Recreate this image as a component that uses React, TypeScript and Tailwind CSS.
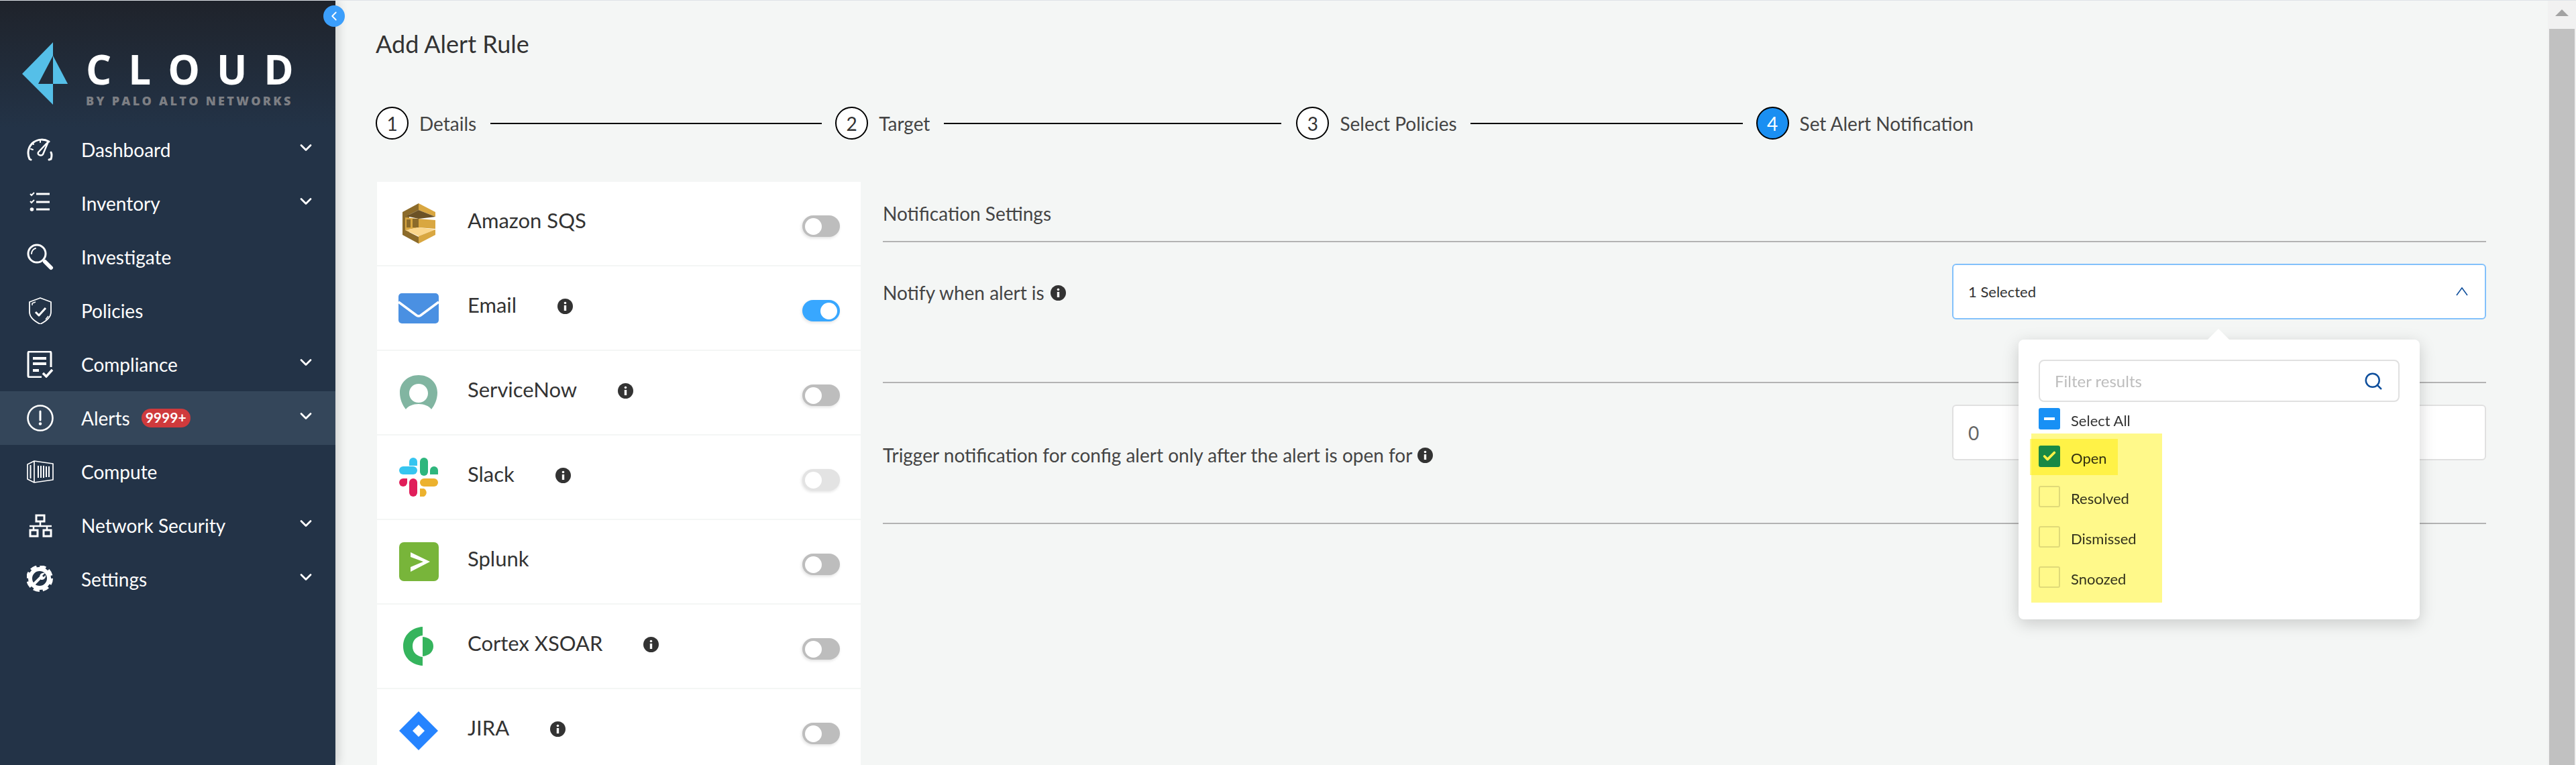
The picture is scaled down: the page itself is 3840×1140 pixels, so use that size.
import React from 'react';
import { ChevronDown, ChevronLeft, Search, Check } from 'lucide-react';

const LATO = "font-['Lato','Open_Sans',sans-serif]";

// sidebar icons, all drawn in a 40x40 box
const DashboardIcon = () => (
  <svg width="40" height="40" viewBox="0 0 40 40" fill="none" stroke="white" strokeWidth="3" strokeLinecap="round">
    <path d="M6 35 L4 34 C0 25 2 15 10 9 C17 4 26 4 33 8" />
    <path d="M36 24 C38 28 37 31 36 34 L33 35" />
    <path d="M20 5 v4 M9 20 l-3 -1 M10 12 l-2 -2" strokeWidth="2" />
    <path d="M17 24 L32 8 L24 27 C22 30 15 28 17 24 Z" strokeWidth="2.5" strokeLinejoin="round" />
  </svg>
);

const InventoryIcon = () => (
  <svg width="40" height="40" viewBox="0 0 40 40" fill="none" stroke="white" strokeWidth="3">
    <path d="M14 6 h20 M14 18 h20 M14 29 h20" />
    <path d="M5 6 l2 2 l4 -4 M5 17 l2 2 l4 -4" strokeWidth="2" />
    <circle cx="7.5" cy="29" r="2.8" fill="white" stroke="none" />
  </svg>
);

const InvestigateIcon = () => (
  <svg width="40" height="40" viewBox="0 0 40 40" fill="none" stroke="white" strokeWidth="3" strokeLinecap="round">
    <circle cx="15" cy="15" r="13" />
    <path d="M7 15 C7 11 10 8 13 7" strokeWidth="2" />
    <path d="M27 27 L36 36" strokeWidth="6" />
  </svg>
);

const PoliciesIcon = () => (
  <svg width="40" height="40" viewBox="0 0 40 40" fill="none" stroke="white" strokeWidth="1.8" strokeLinejoin="round">
    <path d="M20 1 L36 7 V22 C36 30 28 36 20 40 C12 36 4 30 4 22 V7 Z" />
    <path d="M13 22 L18 27 L28 16" strokeWidth="3" />
    <path d="M8 12 V9 L13 7 M32 28 L28 33" strokeWidth="1.5" />
  </svg>
);

const ComplianceIcon = () => (
  <svg width="40" height="40" viewBox="0 0 40 40" fill="none" stroke="white" strokeWidth="3">
    <path d="M36 24 V3 Q36 1 34 1 H4 Q2 1 2 3 V37 Q2 39 4 39 H22" />
    <path d="M9 11 H29 M9 19 H29 M9 29 H18" strokeWidth="4" />
    <path d="M24 33 L29 38 L38 28" strokeWidth="3.5" />
  </svg>
);

const AlertsIcon = () => (
  <svg width="40" height="40" viewBox="0 0 40 40" fill="none" stroke="white" strokeWidth="2.6">
    <circle cx="20" cy="20" r="18.5" />
    <path d="M20 10 V23" strokeWidth="3" strokeLinecap="round" />
    <circle cx="20" cy="28.5" r="2.2" fill="white" stroke="none" />
  </svg>
);

const ComputeIcon = () => (
  <svg width="40" height="40" viewBox="0 0 40 40" fill="none" stroke="white" strokeWidth="1.7" strokeLinejoin="round">
    <path d="M1 9 L11 4 L39 8 V32 L11 36 L1 31 Z M11 4 V36" />
    <path d="M5.5 10 V30 M17 11 V29 M21 11 V29 M25 11 V29 M29 12 V28 M33 12 V28" strokeWidth="2" />
  </svg>
);

const NetworkIcon = () => (
  <svg width="40" height="40" viewBox="0 0 40 40" fill="none" stroke="white" strokeWidth="3">
    <rect x="14" y="5" width="12" height="9" />
    <path d="M4 21 H37 M20 14 V21 M10 21 V26 M30 21 V26" strokeWidth="2.5" />
    <rect x="5" y="27" width="11" height="9" />
    <rect x="25" y="27" width="11" height="9" />
  </svg>
);

const SettingsIcon = () => (
  <svg width="40" height="40" viewBox="0 0 40 40">
    <circle cx="19" cy="19" r="14" fill="none" stroke="white" strokeWidth="6" />
    <circle cx="19" cy="19" r="17.5" fill="none" stroke="white" strokeWidth="5" strokeDasharray="9 4.7" />
    <path d="M11 27 L20 18" stroke="white" strokeWidth="4" strokeLinecap="round" />
    <path d="M19 17 A6 6 0 0 1 27 11 L23 15 L25 17 L28 14 A6 6 0 0 1 21 21 Z" fill="white" />
  </svg>
);

const navItems = [
  { label: 'Dashboard', icon: <DashboardIcon />, sub: true },
  { label: 'Inventory', icon: <InventoryIcon />, sub: true },
  { label: 'Investigate', icon: <InvestigateIcon />, sub: false },
  { label: 'Policies', icon: <PoliciesIcon />, sub: false },
  { label: 'Compliance', icon: <ComplianceIcon />, sub: true },
  { label: 'Alerts', icon: <AlertsIcon />, sub: true, active: true },
  { label: 'Compute', icon: <ComputeIcon />, sub: false },
  { label: 'Network Security', icon: <NetworkIcon />, sub: true },
  { label: 'Settings', icon: <SettingsIcon />, sub: true },
];

const Logo = () => (
  <div className="flex h-[182px] pl-[33px] pt-[62px] shrink-0">
    <svg width="68" height="93" viewBox="0 0 68 93" className="shrink-0">
      <path d="M0 47 L46 0 V20 L24 62 H46 V93 Z" fill="#55bfe8" />
      <path d="M46 20 L68 62 H46 Z" fill="#55bfe8" />
    </svg>
    <div className="ml-[27px] w-[320px]">
      <div className="font-['Open_Sans',sans-serif] font-bold text-[60px] leading-[42px] mt-[19px] tracking-[25px] text-white whitespace-nowrap">
        CLOUD
      </div>
      <div className="font-['Open_Sans',sans-serif] font-extrabold text-[18px] leading-[14px] mt-[19px] tracking-[3.3px] text-[#7d7f84] whitespace-nowrap">
        BY PALO ALTO NETWORKS
      </div>
    </div>
  </div>
);

const Sidebar = () => (
  <aside className="relative w-[500px] shrink-0 bg-[linear-gradient(180deg,#1f232b_0px,#233347_190px)] shadow-[4px_0_14px_rgba(0,0,0,0.16)] z-10">
    <Logo />
    {navItems.map((item) => (
      <div
        key={item.label}
        className={`flex items-center h-[80px] pl-[40px] pr-[30px] ${item.active ? 'bg-[#34465a]' : ''}`}
      >
        <span className="w-[40px] h-[40px] shrink-0">{item.icon}</span>
        <span className={`${LATO} ml-[41px] text-[28px] text-white`}>{item.label}</span>
        {item.active && (
          <span className={`${LATO} ml-[17px] mb-[1px] rounded-full bg-[#cf3a3c] px-[6px] h-[28px] leading-[25px] text-[21px] font-bold text-white`}>
            9999+
          </span>
        )}
        {item.sub && <ChevronDown className="ml-auto mb-[6px] text-white" size={28} strokeWidth={2.4} />}
      </div>
    ))}
    <button className="absolute top-[7px] left-[482px] w-[32px] h-[32px] rounded-full bg-[#3b9efb] flex items-center justify-center">
      <ChevronLeft className="text-white" size={22} strokeWidth={2} />
    </button>
  </aside>
);

const InfoIcon = ({ className = '' }: { className?: string }) => (
  <svg width="23" height="23" viewBox="0 0 23 23" className={`shrink-0 ${className}`}>
    <circle cx="11.5" cy="11.5" r="11.5" fill="#333333" />
    <circle cx="11.5" cy="6.5" r="1.8" fill="white" />
    <rect x="9.8" y="10" width="3.4" height="8" fill="white" />
  </svg>
);

const Step = ({ n, label, active }: { n: number; label: string; active?: boolean }) => (
  <div className="flex items-center shrink-0">
    <span
      className={`${LATO} w-[49px] h-[49px] rounded-full border-2 border-black flex items-center justify-center text-[28px] font-normal ${
        active ? 'bg-[#1a8ff2] text-white' : 'bg-white text-[#333]'
      }`}
    >
      {n}
    </span>
    <span className={`${LATO} ml-[16px] text-[28px] text-[#444]`}>{label}</span>
  </div>
);

const StepLine = ({ width, left, right }: { width: number; left: number; right: number }) => (
  <div className="h-[2px] bg-black shrink-0" style={{ width, marginLeft: left, marginRight: right }} />
);

const Stepper = () => (
  <div className="flex items-center h-[49px] mt-[72px]">
    <Step n={1} label="Details" />
    <StepLine width={494} left={21} right={20} />
    <Step n={2} label="Target" />
    <StepLine width={503} left={21} right={22} />
    <Step n={3} label="Select Policies" />
    <StepLine width={406} left={20} right={20} />
    <Step n={4} label="Set Alert Notification" active />
  </div>
);

const Toggle = ({ on, disabled }: { on?: boolean; disabled?: boolean }) => (
  <span
    className={`mt-[8px] w-[56px] h-[32px] rounded-full flex items-center px-[4px] shrink-0 shadow-[-1px_2px_4px_rgba(0,0,0,0.12)] ${
      on ? 'bg-[#38a7ff] justify-end' : disabled ? 'bg-[#e3e3e3]' : 'bg-[#bdbdbd]'
    }`}
  >
    <span className="w-[25px] h-[25px] rounded-full bg-white" />
  </span>
);

const SqsLogo = () => (
  <svg width="60" height="66" viewBox="0 0 60 66">
    <path d="M6 16 L30 3 V13 L16 20 V46 L30 53 V63 L6 50 Z" fill="#8c6b2a" />
    <path d="M30 3 L55 16 V23 L30 13 Z" fill="#d9a741" />
    <path d="M12 22 L30 13 L55 23 L30 26 Z" fill="#6b5226" />
    <path d="M10 24 L30 26 L55 28 V41 L30 39 L10 43 Z" fill="#d9a741" />
    <rect x="12" y="27" width="6" height="12" fill="#8c6b2a" />
    <rect x="21" y="26" width="9" height="13" fill="#8c6b2a" />
    <path d="M10 43 L30 39 L55 42 L30 52 Z" fill="#fbd68b" />
    <path d="M30 52 L55 42 V50 L30 63 Z" fill="#d9a741" />
  </svg>
);

const EmailLogo = () => (
  <svg width="60" height="45" viewBox="0 0 60 45">
    <rect width="60" height="45" rx="5" fill="#4a90e2" />
    <path d="M0 13 L27 33 Q30 35 33 33 L60 13" fill="none" stroke="white" strokeWidth="3.5" />
  </svg>
);

const ServiceNowLogo = () => (
  <svg width="56" height="52" viewBox="0 0 56 52">
    <path
      fillRule="evenodd"
      fill="#81b5a1"
      d="M28 0 C44 0 56 11 56 26 C56 36 52 45 47 51 C44 46 36 43 28 43 C20 43 12 46 9 51 C4 45 0 36 0 26 C0 11 12 0 28 0 Z M28 13 C20 13 14 19 14 27 C14 35 20 41 28 41 C36 41 42 35 42 27 C42 19 36 13 28 13 Z"
    />
  </svg>
);

const SlackLogo = () => (
  <svg width="58" height="58" viewBox="0 0 58 58">
    <rect x="0" y="13" width="27" height="12" rx="6" fill="#36c5f0" />
    <path d="M15 12 V6 A6 6 0 1 1 27 6 V12 Z" fill="#36c5f0" />
    <rect x="31" y="0" width="12" height="27" rx="6" fill="#2eb67d" />
    <path d="M46 25 V19 A6 6 0 1 1 58 19 V25 Z" fill="#2eb67d" />
    <rect x="31" y="31" width="27" height="12" rx="6" fill="#ecb22e" />
    <path d="M31 46 H37 A6 6 0 1 1 31 58 Z" fill="#ecb22e" />
    <rect x="15" y="31" width="12" height="27" rx="6" fill="#e01e5a" />
    <path d="M12 31 V37 A6 6 0 1 1 0 37 A6 6 0 0 1 6 31 Z" fill="#e01e5a" />
  </svg>
);

const SplunkLogo = () => (
  <svg width="59" height="58" viewBox="0 0 59 58">
    <rect width="59" height="58" rx="7" fill="#78b53a" />
    <path d="M17 15 L46 29 L17 44 V37 L36 29 L17 22 Z" fill="white" />
  </svg>
);

const CortexLogo = () => (
  <svg width="46" height="58" viewBox="0 0 46 58">
    <path d="M29 0 C12 1 0 13 0 29 C0 45 12 57 29 58 V45 C20 44 14 38 14 29 C14 20 20 14 29 13 Z" fill="#35b45d" />
    <path d="M29 15 C39 16 45 21 45 29 C45 37 39 43 29 44 Z" fill="#35b45d" />
  </svg>
);

const JiraLogo = () => (
  <svg width="58" height="58" viewBox="0 0 58 58">
    <path fillRule="evenodd" d="M29 0 L58 29 L29 58 L0 29 Z M29 20 L20 29 L29 38 L38 29 Z" fill="#2684ff" />
  </svg>
);

const integrations = [
  { name: 'Amazon SQS', logo: <SqsLogo />, info: false },
  { name: 'Email', logo: <EmailLogo />, info: true, on: true },
  { name: 'ServiceNow', logo: <ServiceNowLogo />, info: true },
  { name: 'Slack', logo: <SlackLogo />, info: true, disabled: true },
  { name: 'Splunk', logo: <SplunkLogo />, info: false },
  { name: 'Cortex XSOAR', logo: <CortexLogo />, info: true },
  { name: 'JIRA', logo: <JiraLogo />, info: true },
];

const IntegrationList = () => (
  <div className="ml-[2px] w-[721px] shrink-0 flex flex-col gap-[2px]">
    {integrations.map((it) => (
      <div key={it.name} className="h-[124px] bg-white flex items-center pl-[32px] pr-[31px] shrink-0">
        <span className="w-[60px] flex justify-center shrink-0">{it.logo}</span>
        <span className={`${LATO} ml-[43px] mb-[10px] text-[31px] text-[#333] whitespace-nowrap`}>{it.name}</span>
        {it.info && <InfoIcon className="ml-[61px] mb-[6px]" />}
        <span className="ml-auto">
          <Toggle on={it.on} disabled={it.disabled} />
        </span>
      </div>
    ))}
  </div>
);

const FilterOption = ({ label, state, gap = 28 }: { label: string; state: 'on' | 'off' | 'some'; gap?: number }) => (
  <div className="flex items-center h-[32px]" style={{ marginBottom: gap }}>
    <span
      className={`w-[32px] h-[32px] rounded-[3px] flex items-center justify-center shrink-0 ${
        state === 'off' ? 'border-2 border-[#e0e0e0] bg-white' : 'bg-[#1890f5]'
      }`}
    >
      {state === 'on' && <Check className="text-white" size={22} strokeWidth={4} />}
      {state === 'some' && <span className="w-[16px] h-[4px] bg-white" />}
    </span>
    <span className={`${LATO} ml-[16px] text-[22px] text-[#333] mt-[4px]`}>{label}</span>
  </div>
);

const FilterPopover = () => (
  <div className="absolute left-[3009px] top-[505px] w-[598px] h-[417px] bg-white rounded-[8px] shadow-[0_6px_24px_rgba(0,0,0,0.18)] px-[30px] pt-[30px] z-20">
    <span className="absolute -top-[11px] left-[286px] w-[24px] h-[24px] bg-white rotate-45" />
    <div className="relative flex items-center h-[63px] border-2 border-[#e0e0e0] rounded-[8px] pl-[22px] pr-[22px]">
      <span className={`${LATO} text-[24px] text-[#bdbdbd]`}>Filter results</span>
      <Search className="ml-auto text-[#0f4f9c]" size={30} strokeWidth={2} />
    </div>
    <div className="relative mt-[9px]">
      <FilterOption label="Select All" state="some" gap={24} />
      <FilterOption label="Open" state="on" />
      <FilterOption label="Resolved" state="off" />
      <FilterOption label="Dismissed" state="off" />
      <FilterOption label="Snoozed" state="off" />
    </div>
    {/* marker highlights drawn on the screenshot */}
    <span className="absolute left-[19px] top-[140px] w-[195px] h-[252px] bg-[#fff98a] mix-blend-multiply" />
    <span className="absolute left-[17px] top-[148px] w-[131px] h-[54px] bg-[#fff883] mix-blend-multiply" />
  </div>
);

const NotificationSettings = () => (
  <div className="ml-[33px] w-[2390px] shrink-0">
    <div className="h-[90px] border-b-2 border-[#b3b3b3] flex items-center pt-[6px]">
      <span className={`${LATO} text-[28px] text-[#444]`}>Notification Settings</span>
    </div>
    <div className="h-[210px] border-b-2 border-[#b3b3b3] flex items-start justify-between pt-[32px]">
      <div className="flex items-center mt-[22px]">
        <span className={`${LATO} text-[28px] text-[#444]`}>Notify when alert is</span>
        <InfoIcon className="ml-[9px]" />
      </div>
      <div className="w-[796px] h-[83px] border-2 border-[#83c1fb] rounded-[6px] bg-white flex items-center pl-[22px] pr-[22px]">
        <span className={`${LATO} text-[22px] text-[#333]`}>1 Selected</span>
        <svg width="18" height="13" viewBox="0 0 18 13" fill="none" stroke="#0f4f9c" strokeWidth="1.6" className="ml-auto mr-[3px]">
          <path d="M1 12 L9 1 L17 12" />
        </svg>
      </div>
    </div>
    <div className="h-[210px] border-b-2 border-[#b3b3b3] flex items-start justify-between pt-[32px]">
      <div className="flex items-center mt-[54px]">
        <span className={`${LATO} text-[28px] text-[#444]`}>Trigger notification for config alert only after the alert is open for</span>
        <InfoIcon className="ml-[8px]" />
      </div>
      <div className="w-[796px] h-[83px] border-2 border-[#e0e0e0] rounded-[6px] bg-white flex items-center pl-[22px]">
        <span className={`${LATO} text-[28px] text-[#666]`}>0</span>
      </div>
    </div>
  </div>
);

const App: React.FC = () => {
  return (
    <div className="relative flex h-[1140px] w-[3840px] overflow-hidden bg-[#f4f6f5] border-t border-[#dfe3e8]">
      <Sidebar />
      <main className="flex-1 min-w-0 pl-[60px]">
        <h1 className={`${LATO} text-[36px] leading-[44px] mt-[42px] font-normal text-[#333]`}>Add Alert Rule</h1>
        <Stepper />
        <div className="flex mt-[63px]">
          <IntegrationList />
          <NotificationSettings />
        </div>
      </main>
      <div className="w-[42px] shrink-0 bg-[#f1f1f1] flex flex-col items-center">
        <div className="h-[42px] flex items-center justify-center shrink-0">
          <span className="w-0 h-0 border-x-[10px] border-x-transparent border-b-[10px] border-b-[#a3a3a3] mb-[6px]" />
        </div>
        <div className="w-[38px] flex-1 bg-[#c1c1c1]" />
      </div>
      <FilterPopover />
    </div>
  );
};

export default App;
